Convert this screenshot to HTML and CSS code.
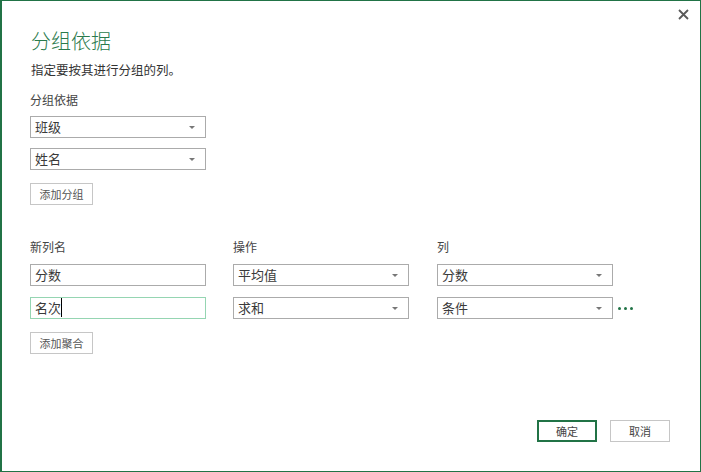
FILE: index.html
```html
<!DOCTYPE html>
<html lang="zh-CN">
<head>
    <meta charset="UTF-8">
    <title>分组依据</title>
    <link rel="stylesheet" href="styles.css">
</head>
<body>
    <div class="dialog">
        <button class="close" title="关闭">
            <svg width="11" height="11" viewBox="0 0 11 11">
                <path d="M1 1 L10 10 M10 1 L1 10" stroke="#5a5a5a" stroke-width="1.8" fill="none"/>
            </svg>
        </button>

        <h1 class="title">分组依据</h1>
        <p class="subtitle">指定要按其进行分组的列。</p>

        <div class="label group-label">分组依据</div>
        <div class="select group-select"><span>班级</span><i class="arrow"></i></div>
        <div class="select group-select second"><span>姓名</span><i class="arrow"></i></div>
        <button class="small-btn add-group">添加分组</button>

        <div class="agg">
            <div class="label">新列名</div>
            <div class="label">操作</div>
            <div class="label">列</div>
            <div></div>

            <div class="input"><span>分数</span></div>
            <div class="select"><span>平均值</span><i class="arrow"></i></div>
            <div class="select"><span>分数</span><i class="arrow"></i></div>
            <div></div>

            <div class="input focused"><span class="caret">名次</span></div>
            <div class="select"><span>求和</span><i class="arrow"></i></div>
            <div class="select"><span>条件</span><i class="arrow"></i></div>
            <div class="more"><b></b><b></b><b></b></div>
        </div>
        <button class="small-btn add-agg">添加聚合</button>

        <div class="footer">
            <button class="btn ok">确定</button>
            <button class="btn">取消</button>
        </div>
    </div>
</body>
</html>
```

FILE: styles.css
```css
html, body {
    margin: 0;
    padding: 0;
    background: #fff;
}

.dialog {
    position: relative;
    width: 701px;
    height: 472px;
    box-sizing: border-box;
    border: 1px solid #217346;
    border-left-width: 2px;
    padding: 28px 30px 29px 28px;
    display: flex;
    flex-direction: column;
    align-items: flex-start;
    font-family: "Noto Sans CJK SC", "Liberation Sans", sans-serif;
    color: #333;
}

.close {
    position: absolute;
    top: 8px;
    right: 11px;
    padding: 0;
    border: none;
    background: none;
    width: 11px;
    height: 11px;
    cursor: pointer;
}

.close svg {
    display: block;
}

.title {
    margin: 0;
    font-size: 20px;
    line-height: 24px;
    font-weight: 300;
    color: #2a7a4c;
    padding-left: 1px;
}

.subtitle {
    margin: 8px 0 0;
    font-size: 12.5px;
    line-height: 18px;
    color: #333;
    padding-left: 1px;
}

.label {
    font-size: 12px;
    line-height: 18px;
    color: #444;
}

.group-label {
    margin-top: 12px;
}

.select, .input {
    position: relative;
    width: 176px;
    height: 22px;
    box-sizing: border-box;
    border: 1px solid #ababab;
    background: #fff;
    padding-left: 4px;
    font-size: 13px;
    line-height: 20px;
    color: #3a3a3a;
}

.group-select {
    margin-top: 7px;
}

.group-select.second {
    margin-top: 10px;
}

.arrow {
    position: absolute;
    right: 10px;
    top: 9px;
    width: 0;
    height: 0;
    border-left: 3px solid transparent;
    border-right: 3px solid transparent;
    border-top: 3px solid #777;
}

.input.focused {
    border-color: #95d5b2;
}

.caret {
    border-right: 1px solid #000;
}

.small-btn {
    margin-top: 13px;
    width: 63px;
    height: 22px;
    box-sizing: border-box;
    border: 1px solid #c6c6c6;
    background: #fff;
    padding: 0;
    font-family: inherit;
    font-size: 11px;
    line-height: 20px;
    color: #555;
}

.agg {
    margin-top: 33px;
    display: grid;
    grid-template-columns: 203px 204px 176px auto;
    grid-template-rows: 26px 33px 22px;
    align-items: start;
}

.more {
    display: flex;
    align-items: center;
    gap: 3px;
    padding-left: 5px;
    height: 22px;
}

.more b {
    width: 3px;
    height: 3px;
    border-radius: 50%;
    background: #217346;
}

.footer {
    margin-top: auto;
    align-self: flex-end;
    display: flex;
    gap: 13px;
}

.btn {
    width: 60px;
    height: 22px;
    box-sizing: border-box;
    border: 1px solid #c6c6c6;
    background: #fff;
    padding: 0;
    font-family: inherit;
    font-size: 11px;
    line-height: 20px;
    color: #444;
}

.btn.ok {
    border: 2px solid #217346;
    line-height: 18px;
}
```
